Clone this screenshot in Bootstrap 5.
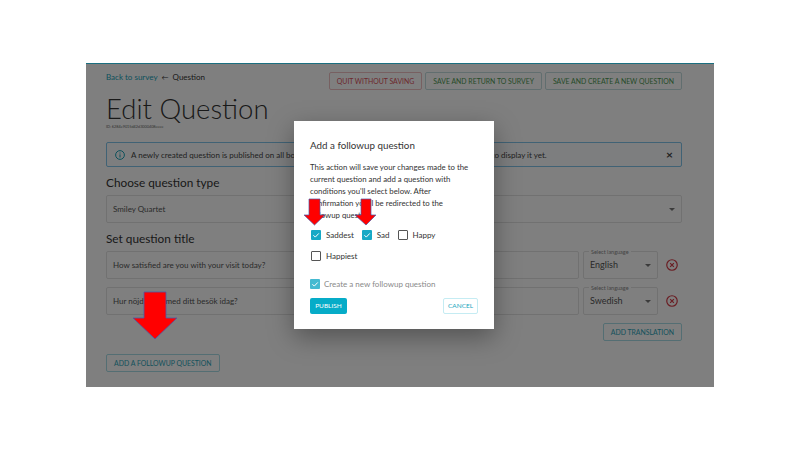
<!DOCTYPE html>
<html lang="en">
<head>
    <meta charset="UTF-8" />
    <meta name="viewport" content="width=device-width, initial-scale=1" />
    <title>Edit Question</title>
    <link href="https://cdn.jsdelivr.net/npm/bootstrap@5.3.0/dist/css/bootstrap.min.css" rel="stylesheet" />
    <style>
        html, body { height: 450px; overflow: hidden; background: #fff; }
        body { font-family: Lato, "Liberation Sans", sans-serif; color: #333; }
        .shot { width: 628px; height: 324px; margin: 63px 0 0 86px; padding: 8px 32px 0 20px; background: #fff; border-top: 1px solid #1b6f80; overflow: hidden; }
        .crumb { font-size: 8px; line-height: 11px; }
        .crumb a { color: #17a2b8; text-decoration: none; }
        .crumb-sep { font-size: 7px; margin: 0 4px; }
        .btn-row { gap: 3px; }
        .btn-thin { font-size: 6.9px; line-height: 1; height: 18px; padding: 0 7px; border-radius: 2px; background: #fff; white-space: nowrap; display: inline-flex; align-items: center; }
        .btn-quit { color: #d9505a; border: 1px solid #efc0c3; }
        .btn-save { color: #4c9650; border: 1px solid #c3dcdf; }
        .btn-teal { color: #2aa3b8; border: 1px solid #a8dde6; }
        .page-head { font-size: 27.5px; font-weight: 300; line-height: 36px; margin: 1px 0 0; color: #333; }
        .id-line { font-size: 3.8px; line-height: 6px; color: #666; margin-top: -3px; }
        .info-bar { height: 25px; margin: 12px 0 0; padding: 0 8px; border: 1px solid #80c4ea; border-radius: 2px; background: #fbfdfe; font-size: 8px; color: #444; display: flex; align-items: center; }
        .info-text { margin-left: 6px; }
        .close-x { margin-left: auto; font-size: 12px; font-weight: 700; line-height: 1; }
        .sect-title { font-size: 11.8px; font-weight: 400; line-height: 16px; margin: 8px 0 4px; color: #333; }
        .fld { height: 28px; padding: 0 6px; font-size: 8px; border: 1px solid #e2e2e2; border-radius: 2px; color: #555; background-color: #fff; display: flex; align-items: center; }
        .caret-down { width: 0; height: 0; border-left: 3px solid transparent; border-right: 3px solid transparent; border-top: 3px solid #777; margin-left: auto; }
        .lang-box { width: 75px; position: relative; font-size: 9px; flex: none; }
        .lang-label { position: absolute; top: -4px; left: 5px; padding: 0 2px; font-size: 5.5px; line-height: 8px; background: #fff; color: #888; }
        .trans-row { gap: 4px; height: 28px; }
        .trans-next { margin-top: 8px; }
        .del-ico { margin: 0 4px 0 4px; flex: none; }
        .after-rows { margin-top: 8px; }
        .dim-layer { position: absolute; left: 86px; top: 64px; width: 628px; height: 323px; background: rgba(0, 0, 0, .5); }
        .followup-box { position: absolute; left: 294px; top: 121px; width: 200px; height: 208px; padding: 16px; background: #fff; box-shadow: 0 8px 24px rgba(0, 0, 0, .35); color: #333; }
        .followup-title { font-size: 9.8px; font-weight: 400; line-height: 14px; margin: 1px 0 9px; }
        .followup-text { font-size: 7.8px; line-height: 12px; margin: 0; max-width: 162px; }
        .opt-row { font-size: 8px; display: flex; align-items: center; height: 12px; padding-left: 1px; }
        .opt-first { margin-top: 8px; }
        .opt-second { margin-top: 9px; }
        .opt-create { margin-top: 16px; padding-left: 0; color: #8a8a8a; }
        .opt-create .tick { opacity: .8; margin-right: 4px; }
        .tick { width: 10px; height: 10px; border-radius: 1px; display: inline-block; flex: none; margin-right: 5px; }
        .tick-on { background: #17a9c6; }
        .tick-off { border: 1px solid #555; background: #fff; }
        .tick svg { display: block; }
        .opt-gap { margin-right: 8px; }
        .dialog-actions { margin-top: 8px; }
        .btn-publish { font-size: 6.5px; width: 37px; height: 16px; padding: 0; justify-content: center; background: #06acc8; color: #fff; border: 0; border-radius: 2px; display: inline-flex; align-items: center; }
        .btn-cancel { font-size: 6.5px; width: 35px; height: 16px; padding: 0; justify-content: center; background: #fff; color: #18a5bd; border: 1px solid #c5ecf3; border-radius: 2px; display: inline-flex; align-items: center; }
        .arrow { position: absolute; }
        .arrow-a { left: 303px; top: 198px; }
        .arrow-b { left: 354px; top: 198px; }
        .arrow-c { left: 132px; top: 291px; }
    </style>
</head>

<body>

    <!-- PAGE -->
    <div class="shot">
        <div class="d-flex justify-content-between">
            <div class="crumb"><a href="#">Back to survey</a><span class="crumb-sep">&#8592;</span>Question</div>
            <div class="d-flex btn-row">
                <button class="btn btn-thin btn-quit">QUIT WITHOUT SAVING</button>
                <button class="btn btn-thin btn-save">SAVE AND RETURN TO SURVEY</button>
                <button class="btn btn-thin btn-save">SAVE AND CREATE A NEW QUESTION</button>
            </div>
        </div>
        <h1 class="page-head">Edit Question</h1>
        <div class="id-line">ID: 6284e9015d42d3000408eeee</div>

        <div class="info-bar">
            <svg class="flex-shrink-0" width="10" height="10" viewBox="0 0 16 16" fill="none" stroke="#17a2b8" stroke-width="1.6"><circle cx="8" cy="8" r="7"/><path d="M8 7v5M8 4v1.6"/></svg>
            <span class="info-text">A newly created question is published on all bound devices, but you haven't configured a survey bound to display it yet.</span>
            <span class="close-x">&#215;</span>
        </div>

        <h2 class="sect-title">Choose question type</h2>
        <div class="fld">Smiley Quartet<span class="caret-down"></span></div>

        <h2 class="sect-title">Set question title</h2>
        <div class="d-flex align-items-center trans-row">
            <div class="fld flex-grow-1">How satisfied are you with your visit today?</div>
            <div class="fld lang-box"><span class="lang-label">Select language</span>English<span class="caret-down"></span></div>
            <svg class="del-ico" width="12" height="12" viewBox="0 0 16 16" fill="none" stroke="#d43b46" stroke-width="1.6"><circle cx="8" cy="8" r="7"/><path d="M5.5 5.5l5 5M10.5 5.5l-5 5"/></svg>
        </div>
        <div class="d-flex align-items-center trans-row trans-next">
            <div class="fld flex-grow-1">Hur nöjd är du med ditt besök idag?</div>
            <div class="fld lang-box"><span class="lang-label">Select language</span>Swedish<span class="caret-down"></span></div>
            <svg class="del-ico" width="12" height="12" viewBox="0 0 16 16" fill="none" stroke="#d43b46" stroke-width="1.6"><circle cx="8" cy="8" r="7"/><path d="M5.5 5.5l5 5M10.5 5.5l-5 5"/></svg>
        </div>
        <div class="d-flex justify-content-end after-rows">
            <button class="btn btn-thin btn-teal">ADD TRANSLATION</button>
        </div>
        <div class="after-rows">
            <button class="btn btn-thin btn-teal">ADD A FOLLOWUP QUESTION</button>
        </div>
    </div>

    <!-- BACKDROP -->
    <div class="dim-layer"></div>

    <!-- DIALOG -->
    <div class="followup-box d-flex flex-column">
        <h5 class="followup-title">Add a followup question</h5>
        <p class="followup-text">This action will save your changes made to the current question and add a question with conditions you'll select below. After confirmation you'll be redirected to the followup question.</p>
        <div class="opt-row opt-first">
            <span class="tick tick-on"><svg width="10" height="10" viewBox="0 0 10 10" fill="none" stroke="#fff" stroke-width="1"><path d="M2.4 5.2l1.9 1.9L7.8 3.4"/></svg></span><span class="opt-gap">Saddest</span>
            <span class="tick tick-on"><svg width="10" height="10" viewBox="0 0 10 10" fill="none" stroke="#fff" stroke-width="1"><path d="M2.4 5.2l1.9 1.9L7.8 3.4"/></svg></span><span class="opt-gap">Sad</span>
            <span class="tick tick-off"></span><span>Happy</span>
        </div>
        <div class="opt-row opt-second">
            <span class="tick tick-off"></span><span>Happiest</span>
        </div>
        <div class="opt-row opt-create">
            <span class="tick tick-on"><svg width="10" height="10" viewBox="0 0 10 10" fill="none" stroke="#fff" stroke-width="1"><path d="M2.4 5.2l1.9 1.9L7.8 3.4"/></svg></span><span>Create a new followup question</span>
        </div>
        <div class="d-flex justify-content-between dialog-actions">
            <button class="btn btn-publish">PUBLISH</button>
            <button class="btn btn-cancel">CANCEL</button>
        </div>
    </div>

    <!-- ARROWS -->
    <svg class="arrow arrow-a" width="24" height="28" viewBox="0 0 24 28"><polygon points="6,1 17,1 17,17 22,17 11.5,27 1,17 6,17" fill="#f00" stroke="#4a5aa8" stroke-width=".7"/></svg>
    <svg class="arrow arrow-b" width="24" height="28" viewBox="0 0 24 28"><polygon points="7,1 17,1 17,17 22,17 12,27 1,17 7,17" fill="#f00" stroke="#4a5aa8" stroke-width=".7"/></svg>
    <svg class="arrow arrow-c" width="46" height="49" viewBox="0 0 46 49"><polygon points="12,1 34,1 34,27 45,27 23,48 1,27 12,27" fill="#f00" stroke="#4a5aa8" stroke-width=".8"/></svg>

</body>
</html>
